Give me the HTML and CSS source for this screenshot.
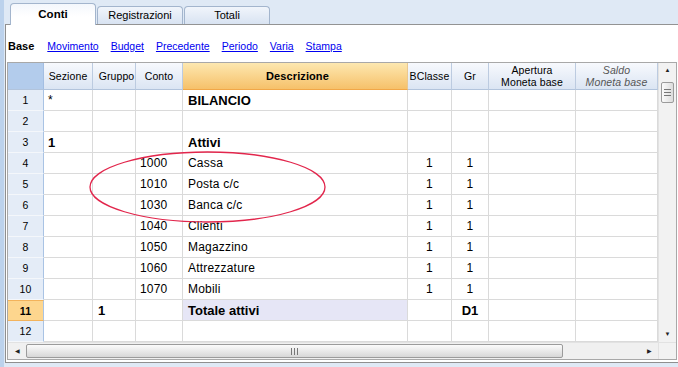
FILE: index.html
```html
<!DOCTYPE html>
<html lang="it">
<head>
  <meta charset="UTF-8" />
  <title>Conti</title>
  <link rel="stylesheet" href="styles.css">
</head>
<body>
  <div class="app">
    <div class="edge"></div>
    <div class="main">
      <div class="tabs">
        <div class="tab active">Conti</div>
        <div class="tab">Registrazioni</div>
        <div class="tab">Totali</div>
      </div>

      <div class="panel">
        <nav class="views">
          <b>Base</b>
          <a href="#">Movimento</a>
          <a href="#">Budget</a>
          <a href="#">Precedente</a>
          <a href="#">Periodo</a>
          <a href="#">Varia</a>
          <a href="#">Stampa</a>
        </nav>

        <div class="sheet">
          <div class="sheet-body">
            <div class="grid">
              <div class="row head">
                <div class="c corner"></div>
                <div class="c">Sezione</div>
                <div class="c">Gruppo</div>
                <div class="c">Conto</div>
                <div class="c sel"><b>Descrizione</b></div>
                <div class="c">BClasse</div>
                <div class="c">Gr</div>
                <div class="c two">Apertura<br>Moneta base</div>
                <div class="c two calc">Saldo<br>Moneta base</div>
              </div>

              <div class="row"><div class="c num">1</div><div class="c">*</div><div class="c"></div><div class="c"></div><div class="c bold">BILANCIO</div><div class="c"></div><div class="c"></div><div class="c"></div><div class="c"></div></div>
              <div class="row"><div class="c num">2</div><div class="c"></div><div class="c"></div><div class="c"></div><div class="c"></div><div class="c"></div><div class="c"></div><div class="c"></div><div class="c"></div></div>
              <div class="row"><div class="c num">3</div><div class="c bold">1</div><div class="c"></div><div class="c"></div><div class="c bold">Attivi</div><div class="c"></div><div class="c"></div><div class="c"></div><div class="c"></div></div>
              <div class="row"><div class="c num">4</div><div class="c"></div><div class="c"></div><div class="c">1000</div><div class="c">Cassa</div><div class="c mid">1</div><div class="c mid">1</div><div class="c"></div><div class="c"></div></div>
              <div class="row"><div class="c num">5</div><div class="c"></div><div class="c"></div><div class="c">1010</div><div class="c">Posta c/c</div><div class="c mid">1</div><div class="c mid">1</div><div class="c"></div><div class="c"></div></div>
              <div class="row"><div class="c num">6</div><div class="c"></div><div class="c"></div><div class="c">1030</div><div class="c">Banca c/c</div><div class="c mid">1</div><div class="c mid">1</div><div class="c"></div><div class="c"></div></div>
              <div class="row"><div class="c num">7</div><div class="c"></div><div class="c"></div><div class="c">1040</div><div class="c">Clienti</div><div class="c mid">1</div><div class="c mid">1</div><div class="c"></div><div class="c"></div></div>
              <div class="row"><div class="c num">8</div><div class="c"></div><div class="c"></div><div class="c">1050</div><div class="c">Magazzino</div><div class="c mid">1</div><div class="c mid">1</div><div class="c"></div><div class="c"></div></div>
              <div class="row"><div class="c num">9</div><div class="c"></div><div class="c"></div><div class="c">1060</div><div class="c">Attrezzature</div><div class="c mid">1</div><div class="c mid">1</div><div class="c"></div><div class="c"></div></div>
              <div class="row"><div class="c num">10</div><div class="c"></div><div class="c"></div><div class="c">1070</div><div class="c">Mobili</div><div class="c mid">1</div><div class="c mid">1</div><div class="c"></div><div class="c"></div></div>
              <div class="row current"><div class="c num">11</div><div class="c"></div><div class="c bold">1</div><div class="c"></div><div class="c bold total">Totale attivi</div><div class="c"></div><div class="c mid bold">D1</div><div class="c"></div><div class="c"></div></div>
              <div class="row"><div class="c num">12</div><div class="c"></div><div class="c"></div><div class="c"></div><div class="c"></div><div class="c"></div><div class="c"></div><div class="c"></div><div class="c"></div></div>
            </div>

            <div class="vscroll">
              <div class="arrow">&#9650;</div>
              <div class="vthumb"><span></span><span></span><span></span></div>
              <div class="track"></div>
              <div class="arrow">&#9660;</div>
            </div>
          </div>

          <div class="hbar">
            <div class="hscroll">
              <div class="arrow">&#9664;</div>
              <div class="hthumb"><span></span><span></span><span></span></div>
              <div class="track"></div>
              <div class="arrow">&#9654;</div>
            </div>
            <div class="box"></div>
          </div>
        </div>
      </div>
    </div>

    <svg class="mark" width="240" height="76" viewBox="0 0 240 76">
      <ellipse cx="119.5" cy="37" rx="117.5" ry="35" fill="none" stroke="#e2264c" stroke-width="1.3"/>
    </svg>
  </div>
</body>
</html>
```

FILE: styles.css
```css
* {
  box-sizing: border-box;
}

body {
  margin: 0;
  background: #dfe9f5;
  font-family: "Liberation Sans", Arial, sans-serif;
  font-size: 11px;
  color: #000;
}

.app {
  position: relative;
  display: flex;
  width: 678px;
  height: 367px;
}

.edge {
  width: 4px;
  background: #bcd2ec;
}

.main {
  flex: 1;
  padding-left: 1px;
}

/* tabs */

.tabs {
  display: flex;
  align-items: flex-end;
  gap: 1px;
  height: 24px;
  padding-left: 5px;
}

.tab {
  width: 86px;
  height: 18px;
  line-height: 17px;
  text-align: center;
  border: 1px solid #a3b5cd;
  border-bottom: none;
  border-radius: 4px 4px 0 0;
  background: linear-gradient(#f1f5fb, #d8e3f2);
}

.tab.active {
  position: relative;
  z-index: 1;
  height: 22px;
  line-height: 20px;
  margin-bottom: -1px;
  font-weight: bold;
  font-size: 11.5px;
  background: linear-gradient(#f4f7fc, #fff 60%);
}

/* panel */

.panel {
  height: 339px;
  background: #fff;
  border-top: 1px solid #939393;
  border-left: 1px solid #8f8f8f;
  border-bottom: 1px solid #8f8f8f;
}

.views {
  display: flex;
  gap: 12px;
  height: 37px;
  padding: 14px 0 0 2px;
  font-size: 10.5px;
  line-height: 14px;
}

.views b {
  margin-right: 1px;
  font-size: 11px;
}

.views a {
  color: #0000f0;
}

.sheet {
  width: 670px;
  margin-left: 1px;
  border: 1px solid #a8a8a8;
}

.sheet-body {
  display: flex;
}

.grid {
  width: 650px;
}

.row {
  display: grid;
  grid-template-columns: 36px 49px 43px 47px 225px 44px 37px 87px 82px;
  height: 21px;
}

.c {
  display: flex;
  align-items: center;
  padding-left: 4px;
  font-size: 12px;
  letter-spacing: 0.2px;
  white-space: nowrap;
  border-right: 1px solid #dadada;
  border-bottom: 1px solid #dadada;
}

.c.mid {
  justify-content: center;
  padding-left: 0;
}

.c.bold {
  font-weight: bold;
  font-size: 13px;
  letter-spacing: 0;
}

.row .c:nth-child(3) {
  padding-left: 5px;
}

.row .c:nth-child(5) {
  padding-left: 5px;
}

.c.num {
  justify-content: center;
  padding-left: 0;
  font-size: 10.5px;
  background: #e4ecf7;
  border-right: 1px solid #a9c3e4;
  border-bottom: 1px solid #f4f7fb;
}

/* header */

.row.head {
  height: 27px;
}

.head .c {
  justify-content: center;
  padding-left: 0;
  font-size: 10.5px;
  letter-spacing: 0.1px;
  text-align: center;
  line-height: 12px;
  background: linear-gradient(#f7f9fd, #dbe5f3);
  border-right: 1px solid #bccbe0;
  border-bottom: 1px solid #b2c4dc;
}

.head .c.corner {
  background: #b3ccec;
  border-right: 1px solid #a3bee2;
}

.head .c.sel {
  font-size: 11px;
  background: linear-gradient(#fde8b0, #f6c16a);
  border-bottom: 1px solid #f1a748;
  border-right: 1px solid #e9c891;
}

.head .c.calc {
  font-style: italic;
  color: #555;
}

.row.current .c.num {
  font-weight: bold;
  background: #fdd68e;
  border-top: 1px solid #f3b35b;
  border-bottom: 1px solid #f3b35b;
}

.c.total {
  background: #e6e6f6;
}

/* scrollbars */

.vscroll {
  display: flex;
  flex-direction: column;
  align-items: center;
  width: 18px;
  height: 279px;
  background: #f2f2f2;
  border-left: 1px solid #e2e2e2;
}

.arrow {
  height: 15px;
  font-size: 6px;
  line-height: 15px;
  color: #222;
  text-align: center;
}

.vscroll .arrow {
  width: 100%;
}

.vthumb {
  display: flex;
  flex-direction: column;
  justify-content: center;
  align-items: center;
  gap: 2px;
  width: 13px;
  height: 21px;
  margin-top: 4px;
  border: 1px solid #9b9b9b;
  border-radius: 2px;
  background: linear-gradient(to right, #fbfbfb, #dcdcdc);
}

.vthumb span {
  width: 7px;
  height: 1px;
  background: #777;
}

.track {
  flex: 1;
}

.hbar {
  display: flex;
  height: 17px;
  border-top: 1px solid #e2e2e2;
}

.hscroll {
  display: flex;
  align-items: center;
  width: 650px;
  background: #f0f0f0;
}

.hscroll .arrow {
  width: 18px;
}

.hthumb {
  display: flex;
  justify-content: center;
  align-items: center;
  gap: 2px;
  width: 537px;
  height: 14px;
  border: 1px solid #9b9b9b;
  border-radius: 2px;
  background: linear-gradient(#fbfbfb, #d7d7d7);
}

.hthumb span {
  width: 1px;
  height: 7px;
  background: #777;
}

.box {
  flex: 1;
  background: #f2f2f2;
  border-left: 1px solid #e2e2e2;
}

.mark {
  position: absolute;
  left: 88px;
  top: 150px;
}
```
